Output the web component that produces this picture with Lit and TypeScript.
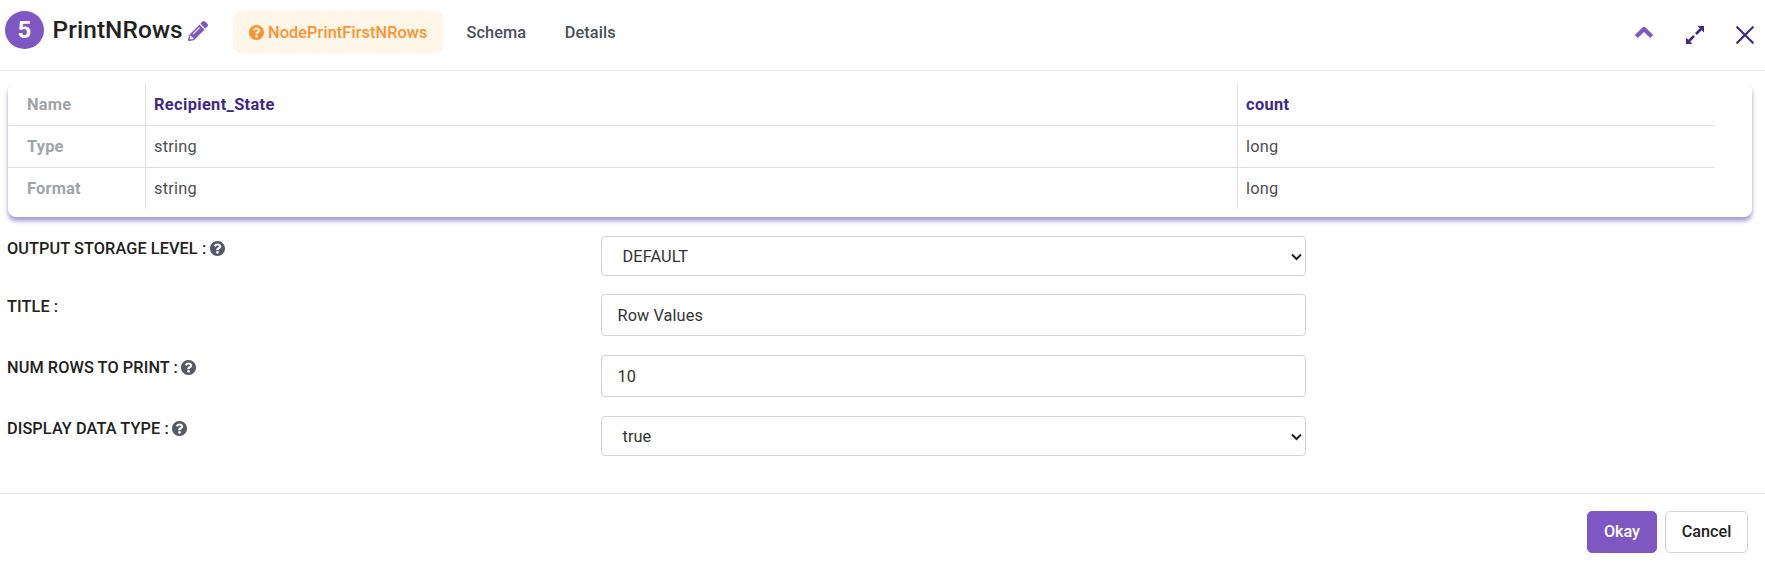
import { LitElement, html, css, svg } from "lit";
import { customElement } from "lit/decorators.js";

const QUESTION =
  "M504 256c0 136.997-111.043 248-248 248S8 392.997 8 256C8 119.083 119.043 8 256 8s248 111.083 248 248zM262.655 90c-54.497 0-89.255 22.957-116.549 63.758-3.536 5.286-2.353 12.415 2.715 16.258l34.699 26.31c5.205 3.947 12.621 3.008 16.665-2.122 17.864-22.658 30.113-35.797 57.303-35.797 20.429 0 45.698 13.148 45.698 32.958 0 14.976-12.363 22.667-32.534 33.976C247.128 238.528 216 254.941 216 296v4c0 6.627 5.373 12 12 12h56c6.627 0 12-5.373 12-12v-1.333c0-28.462 83.186-29.647 83.186-106.667 0-58.002-60.165-102-116.531-102zM256 338c-25.365 0-46 20.635-46 46 0 25.364 20.635 46 46 46s46-20.636 46-46c0-25.365-20.635-46-46-46z";

const helpIcon = () => html`<svg class="help" viewBox="8 8 496 496">${svg`<path d=${QUESTION} />`}</svg>`;

interface Field {
  label: string;
  value: string;
  kind: "select" | "input";
  help: boolean;
}

const FIELDS: Field[] = [
  { label: "OUTPUT STORAGE LEVEL :", value: "DEFAULT", kind: "select", help: true },
  { label: "TITLE :", value: "Row Values", kind: "input", help: false },
  { label: "NUM ROWS TO PRINT :", value: "10", kind: "input", help: true },
  { label: "DISPLAY DATA TYPE :", value: "true", kind: "select", help: true },
];

const SCHEMA = [
  ["Name", "Recipient_State", "count"],
  ["Type", "string", "long"],
  ["Format", "string", "long"],
];

@customElement("app-root")
export class AppRoot extends LitElement {
  static styles = css`
    :host {
      display: flex;
      flex-direction: column;
      height: 565px;
      overflow: hidden;
      box-sizing: border-box;
      background: #fff;
      font-family: Roboto, sans-serif;
      font-size: 16px;
      line-height: 24px;
      color: #212121;
    }
    * {
      box-sizing: border-box;
    }
    svg {
      display: block;
      flex: none;
      fill: currentColor;
    }
    header {
      display: flex;
      align-items: flex-start;
      height: 71px;
      flex: none;
      padding: 11px 10px 0 5px;
      border-bottom: 1px solid #e8e8e8;
    }
    .number {
      width: 39px;
      height: 38px;
      border-radius: 50%;
      background: #7e57c2;
      color: #fff;
      font-size: 24px;
      font-weight: 700;
      line-height: 38px;
      text-align: center;
    }
    .title {
      margin: 0 0 0 8.5px;
      width: 136.5px;
      font-size: 24.4px;
      font-weight: 500;
      line-height: 38px;
      letter-spacing: 0.1px;
      white-space: nowrap;
    }
    .pencil {
      width: 20px;
      height: 20px;
      margin: 10px 0 0 -1px;
      color: #7e57c2;
    }
    .tabs {
      display: flex;
      margin-left: 25px;
      font-weight: 500;
      font-size: 16.3px;
      letter-spacing: 0.1px;
      color: #495057;
    }
    .tab {
      display: flex;
      align-items: center;
      height: 42px;
      padding: 1px 16px 0;
      border-radius: 8px;
      margin-right: 6.5px;
    }
    .active {
      gap: 4px;
      width: 211px;
      background: #fff6ea;
      color: #ff922e;
      white-space: nowrap;
    }
    .help {
      width: 15px;
      height: 15px;
    }
    .active .help {
      margin-top: -1px;
    }
    .tools {
      display: flex;
      margin: 15px 0 0 auto;
      color: #412888;
    }
    .up {
      width: 20px;
      height: 14px;
      margin-right: 32px;
      color: #7e57c2;
    }
    .expand {
      width: 18px;
      height: 18px;
      margin-right: 31px;
    }
    .close {
      width: 20px;
      height: 20px;
      margin-top: -1px;
    }
    .card {
      flex: none;
      height: 134px;
      margin: 12px 13px 0 8px;
      border-radius: 8px;
      background: #fff;
      box-shadow: 0 4px 4px rgba(73, 55, 180, 0.5);
      clip-path: inset(0 -8px -12px -8px);
    }
    .schema {
      display: grid;
      grid-template-columns: 137px 1092px 478px;
      grid-template-rows: 43px 42px 41px;
      width: 1707px;
    }
    .cell {
      padding: 9px 8px 0;
      border-left: 1px solid #dee2e6;
      border-bottom: 1px solid #dee2e6;
      font-size: 16.4px;
      letter-spacing: 0.2px;
      color: #4f4f51;
    }
    .cell.first {
      padding-top: 10px;
    }
    .cell.last {
      border-bottom: 0;
    }
    .cell.key {
      padding-left: 19px;
      border-left: 0;
      font-weight: 700;
      color: #9fa4aa;
    }
    .cell.name {
      font-weight: 700;
      letter-spacing: 0.35px;
      color: #412888;
    }
    .form {
      flex: 1;
      display: flex;
      flex-direction: column;
      padding: 19px 7px 0;
    }
    .row {
      display: grid;
      grid-template-columns: 594px 705px;
      align-items: start;
    }
    .row.select {
      height: 58px;
    }
    .row.input {
      height: 61px;
    }
    .label {
      display: flex;
      align-items: center;
      gap: 3.5px;
      padding-top: 1px;
      font-weight: 500;
      font-size: 16.3px;
      letter-spacing: 0.09px;
    }
    .label .help {
      margin-top: -2px;
      color: #545b66;
    }
    .control {
      display: flex;
      align-items: center;
      justify-content: space-between;
      border: 1px solid #ced4da;
      border-radius: 4px;
      font-size: 16.3px;
      letter-spacing: 0.1px;
      color: #343434;
    }
    .control.select {
      height: 40px;
      padding: 1px 3.5px 0 20.5px;
    }
    .control.input {
      height: 42px;
      padding: 1px 15.5px 0;
    }
    .chevron {
      width: 11px;
      height: 8px;
      color: #212121;
    }
    footer {
      display: flex;
      flex: none;
      gap: 8px;
      justify-content: flex-end;
      height: 72px;
      padding: 17px 17px 0;
      border-top: 1px solid #e8e8e8;
    }
    .btn {
      height: 42px;
      padding: 0 0 2px;
      border: 1px solid #ced4da;
      border-radius: 5px;
      background: #fff;
      color: #212121;
      font: 500 16.2px Roboto, sans-serif;
      width: 83px;
    }
    .btn.primary {
      width: 70px;
      border-color: #7e57c2;
      background: #7e57c2;
      color: #fff;
    }
  `;

  render() {
    return html`
      <header>
        <div class="number">5</div>
        <h1 class="title">PrintNRows</h1>
        <svg class="pencil" viewBox="0 0 512 512">
          <path
            d="M497.9 142.1l-46.1 46.1c-4.7 4.7-12.3 4.7-17 0l-111-111c-4.7-4.7-4.7-12.3 0-17l46.1-46.1c18.7-18.7 49.1-18.7 67.9 0l60.1 60.1c18.8 18.7 18.8 49.1 0 67.9zM284.2 99.8L21.6 362.4.4 483.9c-2.9 16.4 11.4 30.6 27.8 27.8l121.5-21.3 262.6-262.6c4.7-4.7 4.7-12.3 0-17l-111-111c-4.8-4.7-12.4-4.7-17.1 0zM124.1 339.9c-5.5-5.5-5.5-14.3 0-19.8l154-154c5.5-5.5 14.3-5.5 19.8 0s5.5 14.3 0 19.8l-154 154c-5.5 5.5-14.3 5.5-19.8 0zM88 424h48v36.3l-64.5 11.3-31.1-31.1L51.7 376H88v48z"
          />
        </svg>
        <nav class="tabs">
          <div class="tab active">${helpIcon()}<span>NodePrintFirstNRows</span></div>
          <div class="tab">Schema</div>
          <div class="tab">Details</div>
        </nav>
        <div class="tools">
          <svg class="up" viewBox="0 0 20 14">
            <path
              d="M2.3 10.6 10 2.9 17.7 10.6"
              fill="none"
              stroke="currentColor"
              stroke-width="4.2"
              stroke-linejoin="round"
            />
          </svg>
          <svg class="expand" viewBox="0 0 18 18">
            <path d="M11.5 0H18v6.5zM0 11.5V18h6.5z" />
            <path d="M10 8 15 3M8 10l-5 5" fill="none" stroke="currentColor" stroke-width="2.6" />
          </svg>
          <svg class="close" viewBox="0 0 20 20">
            <path
              d="M2.2 2.2 17.8 17.8M17.8 2.2 2.2 17.8"
              fill="none"
              stroke="currentColor"
              stroke-width="2.2"
              stroke-linecap="round"
            />
          </svg>
        </div>
      </header>
      <section class="card">
        <div class="schema">
          ${SCHEMA.map((row, r) =>
            row.map(
              (text, c) =>
                html`<div
                  class="cell ${c === 0 ? "key" : r === 0 ? "name" : ""} ${r === 0 ? "first" : r === 2 ? "last" : ""}"
                >
                  ${text}
                </div>`
            )
          )}
        </div>
      </section>
      <section class="form">
        ${FIELDS.map(
          (f) => html`<div class="row ${f.kind}">
            <div class="label"><span>${f.label}</span>${f.help ? helpIcon() : ""}</div>
            <div class="control ${f.kind}">
              <span>${f.value}</span>
              ${f.kind === "select"
                ? html`<svg class="chevron" viewBox="0 0 11 8">
                    <path d="M1 1.5 5.5 6 10 1.5" fill="none" stroke="currentColor" stroke-width="2" />
                  </svg>`
                : ""}
            </div>
          </div>`
        )}
      </section>
      <footer>
        <button class="btn primary">Okay</button>
        <button class="btn">Cancel</button>
      </footer>
    `;
  }
}
